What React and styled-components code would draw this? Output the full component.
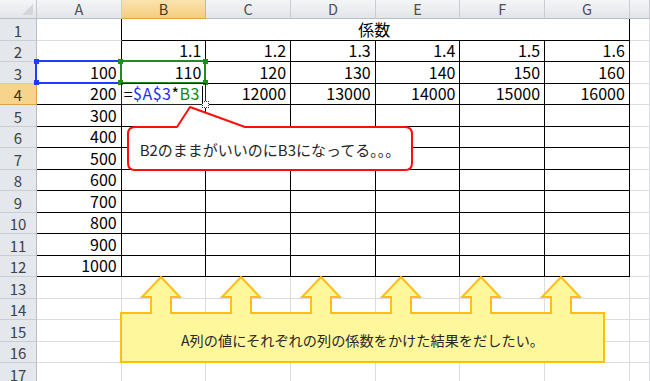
import React from "react";
import styled, { createGlobalStyle } from "styled-components";

const GlobalStyle = createGlobalStyle`
  html, body { margin: 0; padding: 0; background: #fff; overflow: hidden; }
  body { font-family: "Noto Sans CJK JP", "Noto Sans", sans-serif; }
`;

const FONT = `"Noto Sans CJK JP", "Noto Sans", sans-serif`;
const GRID = "#dadcdd";
const INK = "#000";

const Sheet = styled.div`
  position: relative;
  width: 650px;
  height: 381px;
  overflow: hidden;
  display: grid;
  grid-template-columns: 37px repeat(7, 84.7px) 1fr;
  grid-template-rows: 19px repeat(17, 21.5px);
  font-family: ${FONT};
`;

const Corner = styled.div`
  position: relative;
  background: linear-gradient(#f4f5f7, #e2e5e9);
  border-right: 1px solid #c3c7cc;
  border-bottom: 1px solid #b9bec4;
  box-sizing: border-box;
  &::after {
    content: "";
    position: absolute;
    right: 3px;
    bottom: 3px;
    border-left: 11px solid transparent;
    border-bottom: 11px solid #d3d6da;
  }
`;

const ColHead = styled.div`
  display: flex;
  align-items: center;
  justify-content: center;
  box-sizing: border-box;
  font-size: 14.5px;
  line-height: 18px;
  color: ${(p) => (p.$active ? "#4a3a1a" : "#4b4f55")};
  background: ${(p) =>
    p.$active
      ? "linear-gradient(#fbe3ae, #f5cd7e)"
      : "linear-gradient(#f4f5f7, #e2e5e9)"};
  border-right: 1px solid ${(p) => (p.$active ? "#e2b35c" : "#c9cdd2")};
  border-bottom: 1px solid ${(p) => (p.$active ? "#dba447" : "#b9bec4")};
`;

const RowHead = styled.div`
  display: flex;
  align-items: flex-end;
  justify-content: center;
  box-sizing: border-box;
  padding-bottom: 2px;
  font-size: 15px;
  line-height: 1;
  color: ${(p) => (p.$active ? "#3c2f12" : "#3d4248")};
  background: ${(p) => (p.$active ? "#f7d48b" : "#e4e7eb")};
  border-right: 1px solid ${(p) => (p.$active ? "#dba447" : "#b9bec4")};
  border-bottom: 1px solid ${(p) => (p.$active ? "#dba447" : "#c9cdd2")};
`;

const Cell = styled.div`
  position: relative;
  display: flex;
  align-items: flex-end;
  justify-content: ${(p) =>
    p.$align === "center" ? "center" : p.$align === "left" ? "flex-start" : "flex-end"};
  box-sizing: border-box;
  grid-column: ${(p) => (p.$span ? `span ${p.$span}` : "auto")};
  padding: 0 4px 3px 2px;
  font-size: 16px;
  line-height: 1;
  color: ${INK};
  white-space: nowrap;
  border-right: 1px solid ${(p) => (p.$r ? INK : GRID)};
  border-bottom: 1px solid ${(p) => (p.$b ? INK : GRID)};
`;

const RefBox = styled.div`
  position: absolute;
  inset: -2px -1px -1px -2px;
  border: 2px solid ${(p) => p.$color};
  pointer-events: none;
  z-index: 2;
`;

const Handle = styled.span`
  position: absolute;
  width: 5px;
  height: 5px;
  background: ${(p) => p.$color};
  left: ${(p) => (p.$x ? "auto" : "-3.5px")};
  right: ${(p) => (p.$x ? "-3.5px" : "auto")};
  top: ${(p) => (p.$y ? "auto" : "-3.5px")};
  bottom: ${(p) => (p.$y ? "-3.5px" : "auto")};
`;

const EditBox = styled.div`
  position: absolute;
  inset: -1px;
  border: 1px solid #222;
  z-index: 3;
  &::after {
    content: "";
    position: absolute;
    right: -4px;
    bottom: -4px;
    width: 5px;
    height: 5px;
    border: 1px dotted #333;
    background: #fff;
  }
`;

const Formula = styled.span`
  position: relative;
  z-index: 4;
  letter-spacing: 0.5px;
`;

const Tok = styled.span`
  color: ${(p) => p.$c || INK};
`;

const Caret = styled.span`
  position: absolute;
  right: 2px;
  top: 2px;
  bottom: 1px;
  width: 1px;
  background: #000;
  z-index: 4;
`;

const Overlay = styled.div`
  position: absolute;
  left: ${(p) => p.$x}px;
  top: ${(p) => p.$y}px;
  width: ${(p) => p.$w}px;
  height: ${(p) => p.$h}px;
  display: flex;
  align-items: center;
  justify-content: center;
  z-index: 10;
`;

const Shape = styled.svg`
  position: absolute;
  left: 0;
  top: 0;
  overflow: visible;
`;

const Label = styled.span`
  position: relative;
  font-family: ${FONT};
  font-size: ${(p) => p.$size}px;
  line-height: 1;
  color: #262626;
  white-space: nowrap;
  padding-top: ${(p) => p.$shift || 0}px;
`;

function Ref({ color, yellowCorner }) {
  return (
    <RefBox $color={color}>
      <Handle $color={color} />
      <Handle $color={color} $x />
      <Handle $color={color} $y />
      <Handle $color={yellowCorner || color} $x $y />
    </RefBox>
  );
}

const cols = ["A", "B", "C", "D", "E", "F", "G", ""];
const factors = ["1.1", "1.2", "1.3", "1.4", "1.5", "1.6"];
const times = ["110", "120", "130", "140", "150", "160"];
const results = [null, "12000", "13000", "14000", "15000", "16000"];

function Row({ r }) {
  const cells = [];
  const aVal = r >= 3 && r <= 12 ? String((r - 2) * 100) : "";
  cells.push(
    <Cell key="a" $r={r <= 12} $b={r >= 2 && r <= 12}>
      {aVal}
      {r === 3 && <Ref color="#1f3bff" yellowCorner="#e8d820" />}
    </Cell>
  );
  if (r === 1) {
    cells.push(
      <Cell key="bg" $span={6} $align="center" $r $b>
        係数
      </Cell>
    );
  } else {
    for (let c = 0; c < 6; c++) {
      const inTable = r <= 12;
      if (r === 4 && c === 0) {
        cells.push(
          <Cell key={c} $align="left" $r $b>
            <Formula>
              <Tok>=</Tok>
              <Tok $c="#1f2eff">$A$3</Tok>
              <Tok>*</Tok>
              <Tok $c="#128a12">B3</Tok>
            </Formula>
            <Caret />
            <EditBox />
          </Cell>
        );
        continue;
      }
      let content = "";
      if (r === 2) content = factors[c];
      if (r === 3) content = times[c];
      if (r === 4) content = results[c];
      cells.push(
        <Cell key={c} $r={inTable} $b={inTable}>
          {content}
          {r === 3 && c === 0 && <Ref color="#1e8c1e" />}
        </Cell>
      );
    }
  }
  cells.push(<Cell key="h" />);
  return (
    <>
      <RowHead $active={r === 4}>{r}</RowHead>
      {cells}
    </>
  );
}

// bubble body is 284x43; the pointer rises above it toward B4
const BUBBLE =
  "M7,0 L49,0 L62,-20 L117,0 L277,0 Q284,0 284,7 L284,36 Q284,43 277,43 L7,43 Q0,43 0,36 L0,7 Q0,0 7,0 Z";

// banner body is 483x49; six arrows point up to columns B..G
function bannerPath() {
  const w = 483, h = 49;
  const tips = [40, 120, 200, 280, 360, 440];
  let d = "M0,0";
  tips.forEach((cx) => {
    d += ` L${cx - 10},0 L${cx - 10},-16 L${cx - 19},-16 L${cx},-36 L${cx + 19},-16 L${cx + 10},-16 L${cx + 10},0`;
  });
  d += ` L${w},0 L${w},${h} L0,${h} Z`;
  return d;
}

export default function App() {
  const rows = Array.from({ length: 17 }, (_, i) => i + 1);
  return (
    <>
      <GlobalStyle />
      <Sheet>
        <Corner />
        {cols.map((c, i) => (
          <ColHead key={i} $active={c === "B"}>
            {c}
          </ColHead>
        ))}
        {rows.map((r) => (
          <Row key={r} r={r} />
        ))}

        <Overlay $x={128} $y={127} $w={284} $h={43}>
          <Shape width="284" height="43">
            <path
              d={BUBBLE}
              fill="#fff"
              stroke="#ff0d0d"
              strokeWidth="2"
              strokeLinejoin="round"
            />
          </Shape>
          <Label $size={15} $shift={2}>B2のままがいいのにB3になってる。。。</Label>
        </Overlay>

        <Overlay $x={121} $y={313} $w={483} $h={49}>
          <Shape width="483" height="49">
            <path d={bannerPath()} fill="#fff79b" stroke="#fdbf12" strokeWidth="2" />
          </Shape>
          <Label $size={14.2} $shift={6}>A列の値にそれぞれの列の係数をかけた結果をだしたい。</Label>
        </Overlay>
      </Sheet>
    </>
  );
}
